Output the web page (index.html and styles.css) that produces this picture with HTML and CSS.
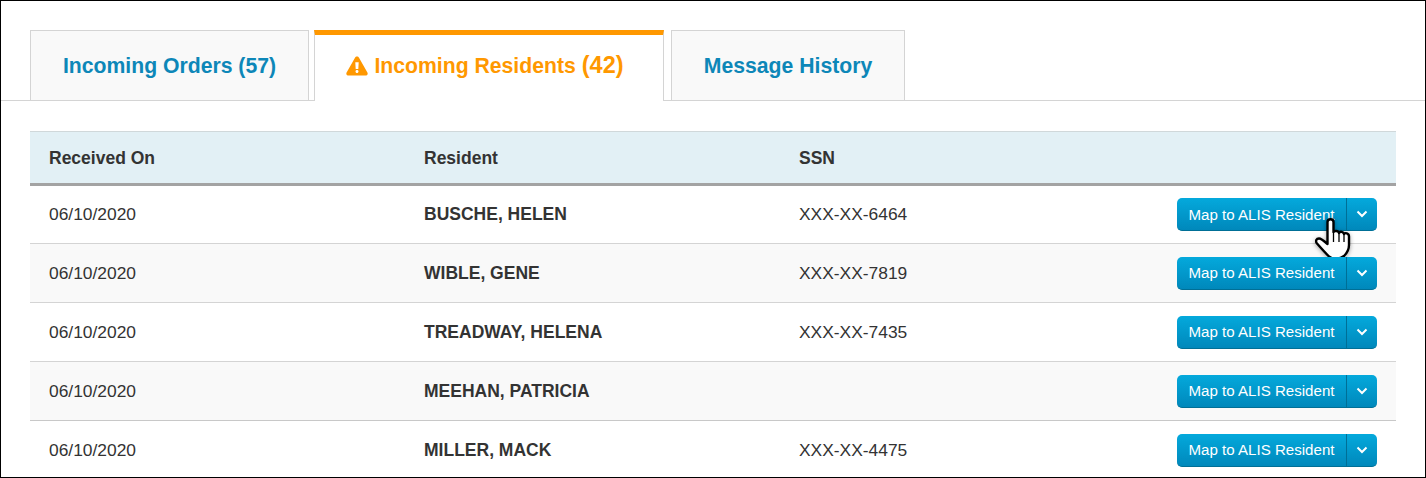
FILE: index.html
```html
<!DOCTYPE html>
<html lang="en">
<head>
  <meta charset="UTF-8" />
  <title>Incoming Residents</title>
  <link rel="stylesheet" href="styles.css">
</head>
<body>
  <div class="page">
    <div class="tabs">
      <a class="tab">Incoming Orders (57)</a>
      <a class="tab active">
        <svg class="warn-icon" viewBox="0 0 22 20" width="22" height="20">
          <path fill="#ff9800" fill-rule="evenodd" d="M11 0.5c.9 0 1.6.5 2 1.2l8.4 14.9c.8 1.5-.2 3-1.9 3H2.500c-1.700 0-2.700-1.500-1.900-3L9 1.700C9.400 1 10.100.5 11 .5zM9.300 6.200l.4 6.800h2.600l.4-6.800zM11 14.100c-.9 0-1.500.6-1.500 1.400s.6 1.500 1.500 1.500 1.500-.7 1.500-1.500-.6-1.400-1.500-1.400z"/>
        </svg>
        Incoming Residents <span class="count">(42)</span>
      </a>
      <a class="tab">Message History</a>
    </div>

    <table class="residents">
      <thead>
        <tr>
          <th class="col-date">Received On</th>
          <th class="col-name">Resident</th>
          <th class="col-ssn">SSN</th>
          <th></th>
        </tr>
      </thead>
      <tbody>
        <tr>
          <td>06/10/2020</td>
          <td class="name">BUSCHE, HELEN</td>
          <td>XXX-XX-6464</td>
          <td class="actions">
            <div class="btn-group">
              <button class="btn">Map to ALIS Resident</button>
              <button class="btn caret"><svg viewBox="0 0 12 8" width="12" height="8"><path d="M1.500 1.500L6 6l4.500-4.500" fill="none" stroke="#fff" stroke-width="2"/></svg></button>
              <svg class="hand" viewBox="0 0 36 42" width="36" height="42">
                <path fill="#fff" stroke="#000" stroke-width="2.400" stroke-linejoin="round" d="M12.500 4C12.500 2 14 1.200 15.500 1.200S18.500 2 18.500 4V14C19 12.500 23.500 12.500 24 15C25 13 28.500 13.500 29 16C30 14.500 34 15 34 18.500V27C34 33 31 36 29 38C25 41.500 17 41.500 13.500 38C10.500 35 6 30 2 25.500C0 23 1.500 20.500 4 20.500C6 20.500 8 22 12.500 26Z"/>
                <path stroke="#000" stroke-width="1.300" d="M18.500 14V24M24 15V24M29 16V24"/>
              </svg>
            </div>
          </td>
        </tr>
        <tr>
          <td>06/10/2020</td>
          <td class="name">WIBLE, GENE</td>
          <td>XXX-XX-7819</td>
          <td class="actions">
            <div class="btn-group">
              <button class="btn">Map to ALIS Resident</button>
              <button class="btn caret"><svg viewBox="0 0 12 8" width="12" height="8"><path d="M1.500 1.500L6 6l4.500-4.500" fill="none" stroke="#fff" stroke-width="2"/></svg></button>
            </div>
          </td>
        </tr>
        <tr>
          <td>06/10/2020</td>
          <td class="name">TREADWAY, HELENA</td>
          <td>XXX-XX-7435</td>
          <td class="actions">
            <div class="btn-group">
              <button class="btn">Map to ALIS Resident</button>
              <button class="btn caret"><svg viewBox="0 0 12 8" width="12" height="8"><path d="M1.500 1.500L6 6l4.500-4.500" fill="none" stroke="#fff" stroke-width="2"/></svg></button>
            </div>
          </td>
        </tr>
        <tr>
          <td>06/10/2020</td>
          <td class="name">MEEHAN, PATRICIA</td>
          <td></td>
          <td class="actions">
            <div class="btn-group">
              <button class="btn">Map to ALIS Resident</button>
              <button class="btn caret"><svg viewBox="0 0 12 8" width="12" height="8"><path d="M1.500 1.500L6 6l4.500-4.500" fill="none" stroke="#fff" stroke-width="2"/></svg></button>
            </div>
          </td>
        </tr>
        <tr>
          <td>06/10/2020</td>
          <td class="name">MILLER, MACK</td>
          <td>XXX-XX-4475</td>
          <td class="actions">
            <div class="btn-group">
              <button class="btn">Map to ALIS Resident</button>
              <button class="btn caret"><svg viewBox="0 0 12 8" width="12" height="8"><path d="M1.500 1.500L6 6l4.500-4.500" fill="none" stroke="#fff" stroke-width="2"/></svg></button>
            </div>
          </td>
        </tr>
      </tbody>
    </table>
  </div>
</body>
</html>
```

FILE: styles.css
```css
* {
  box-sizing: border-box;
}

html, body {
  margin: 0;
  height: 100%;
  overflow: hidden;
}

body {
  font-family: "Liberation Sans", Arial, sans-serif;
  font-size: 17.4px;
  color: #333333;
  background: #ffffff;
}

.page {
  height: 478px;
  border: 1px solid #000000;
  overflow: hidden;
  padding-top: 29px;
}

.tabs {
  display: flex;
  height: 71px;
  padding-left: 29px;
  gap: 5px;
  border-bottom: 1px solid #d4d4d4;
}

.tab {
  display: flex;
  align-items: center;
  justify-content: center;
  height: 71px;
  width: 279px;
  background: #f9f9f9;
  border: 1px solid #d4d4d4;
  color: #0d87b8;
  font-size: 21.2px;
  font-weight: bold;
}

.tab:nth-child(3) {
  width: 234px;
  margin-left: 2px;
}

.tab.active {
  width: 350px;
  padding: 0 8px 5px 0;
  background: #ffffff;
  border-bottom: none;
  border-top: 5px solid #ff9800;
  color: #ff9800;
}

.warn-icon {
  margin-right: 6px;
}

.count {
  font-size: 23.5px;
  margin-left: 6px;
}

.residents {
  width: 1366px;
  margin: 30px 0 0 29px;
  border-collapse: collapse;
  table-layout: fixed;
}

.residents th {
  height: 53px;
  padding: 2px 19px 0;
  text-align: left;
  font-size: 17.5px;
  background: #e2f0f5;
  border-top: 1px solid #d0d8da;
  border-bottom: 3px solid #a3a3a3;
}

.col-date,
.col-name,
.col-ssn {
  width: 375px;
}

.residents td {
  height: 59px;
  padding: 0 19px;
  border-bottom: 1px solid #d4d4d4;
}

.residents tbody tr:nth-child(even) td {
  background: #f9f9f9;
}

.residents tbody tr:nth-child(4) td {
  border-bottom-color: #c8c8c8;
}

.residents td.name {
  font-weight: bold;
  font-size: 17.5px;
}

.residents td.actions {
  padding-right: 19px;
}

.btn-group {
  position: relative;
  display: flex;
  justify-content: flex-end;
}

.btn {
  height: 33px;
  padding: 0 11.5px;
  border: none;
  border-bottom: 1px solid #006f96;
  border-radius: 5px 0 0 5px;
  background: linear-gradient(#04a9dc, #0088bb);
  color: #ffffff;
  font-family: "Liberation Sans", Arial, sans-serif;
  font-size: 15.1px;
}

.btn.caret {
  display: flex;
  align-items: center;
  justify-content: center;
  width: 31px;
  padding: 0;
  border-left: 1px solid #006f96;
  border-radius: 0 5px 5px 0;
}

.hand {
  position: absolute;
  right: 26px;
  top: 20px;
  filter: drop-shadow(0 1px 2px rgba(0, 0, 0, 0.35));
}
```
